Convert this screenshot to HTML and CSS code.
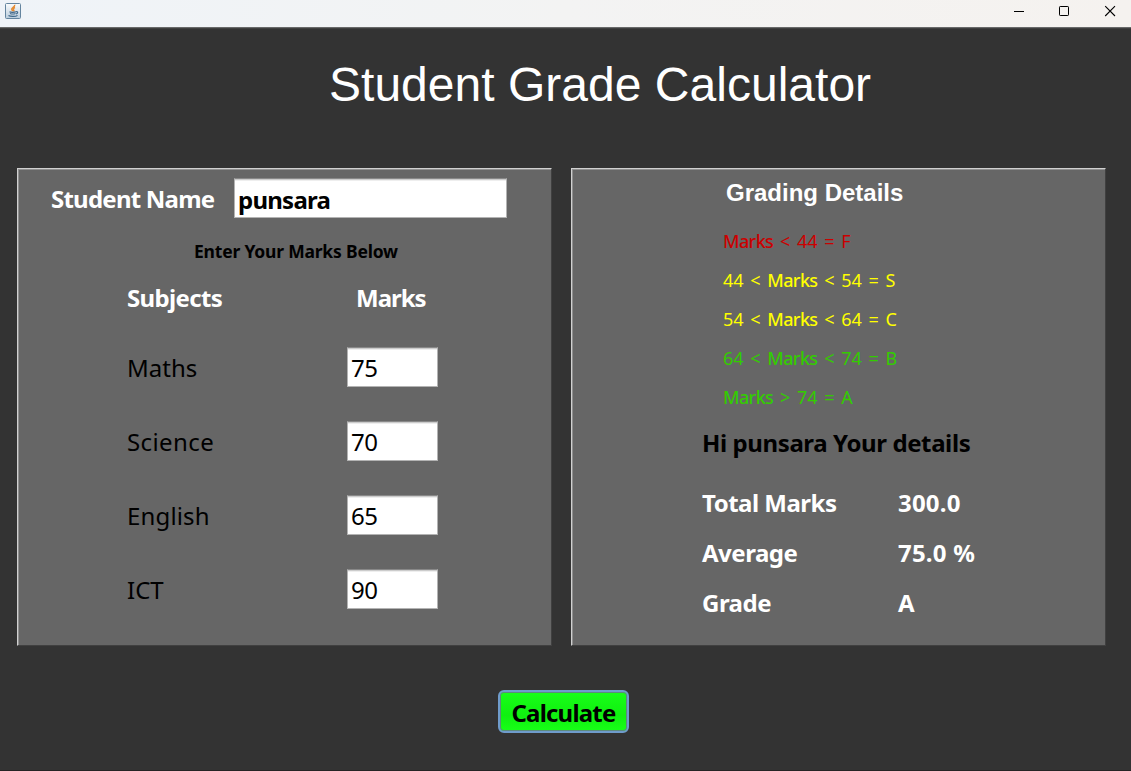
FILE: index.html
```html
<!DOCTYPE html>
<html lang="en">
<head>
<meta charset="utf-8">
<title>Student Grade Calculator</title>
<link rel="stylesheet" href="styles.css">
</head>
<body>
<header class="titlebar">
  <svg class="app-icon" width="16" height="16" viewBox="0 0 16 16" fill="none">
    <defs><linearGradient id="tile" x1="0" y1="0" x2="0" y2="1"><stop offset="0" stop-color="#fbfcfd"/><stop offset="1" stop-color="#b9ccdc"/></linearGradient></defs>
    <rect x=".5" y=".5" width="15" height="15" rx="1" fill="url(#tile)" stroke="#64849f"/>
    <path d="M9.700 1.800C10.400 4 6.200 4.500 6.700 6.300c.2.8 1 1.200 1 2M10 4.500c-2 .8-2.100 1.700-1.300 2.500.4.500.2 1-.2 1.300" stroke="#e58a32" stroke-width="1.400"/>
    <path d="M4.500 8.800c1 .7 5 .7 6.500 0M5 10.500c1.500.6 4 .6 5.500 0M11 8.700c2.300-.5 2.200 1.700 0 2.300M3.500 12.500c1.800 1.300 7.500 1.200 9-.2" stroke="#41688a" stroke-width="1.100"/>
  </svg>
  <div class="window-controls">
    <svg width="12" height="12" viewBox="0 0 12 12"><path d="M2 6.500h10" stroke="#000"/></svg>
    <svg width="12" height="12" viewBox="0 0 12 12"><rect x="1.500" y="1.500" width="9" height="9" rx=".7" fill="none" stroke="#000"/></svg>
    <svg width="12" height="12" viewBox="0 0 12 12"><path d="M1.200 1.200l9.800 9.800M11 1.200L1.200 11" stroke="#000" stroke-width="1.100"/></svg>
  </div>
</header>
<main class="window">
  <h1 class="title">Student Grade Calculator</h1>
  <div class="panels">
    <section class="panel entry">
      <div class="name-row"><span class="label name-label">Student Name</span><span class="field name-field">punsara</span></div>
      <p class="hint">Enter Your Marks Below</p>
      <div class="columns"><span class="label subjects">Subjects</span><span class="label marks">Marks</span></div>
      <div class="subject-list">
        <div class="subject-row"><span class="maths">Maths</span><span class="field mark">75</span></div>
        <div class="subject-row"><span class="science">Science</span><span class="field mark">70</span></div>
        <div class="subject-row"><span class="english">English</span><span class="field mark">65</span></div>
        <div class="subject-row"><span class="ict">ICT</span><span class="field mark">90</span></div>
      </div>
    </section>
    <section class="panel details">
      <h2 class="details-title">Grading Details</h2>
      <ul class="scale">
        <li class="fail"><b>Marks</b> &lt; 44 = F</li>
        <li class="pass">44 &lt; <b>Marks</b> &lt; 54 = S</li>
        <li class="pass">54 &lt; <b>Marks</b> &lt; 64 = C</li>
        <li class="good">64 &lt; <b>Marks</b> &lt; 74 = B</li>
        <li class="good"><b>Marks</b> &gt; 74 = A</li>
      </ul>
      <p class="greeting">Hi punsara Your details</p>
      <div class="results">
        <span>Total Marks</span><span class="value">300.0</span>
        <span>Average</span><span class="value">75.0 %</span>
        <span>Grade</span><span class="value">A</span>
      </div>
    </section>
  </div>
  <button class="calculate">Calculate</button>
</main>
</body>
</html>
```
FILE: styles.css
```css
* { box-sizing: border-box; }
body {
  margin: 0;
  width: 1131px;
  height: 771px;
  overflow: hidden;
  background: #333;
  font-family: "Noto Sans", "Open Sans", sans-serif;
  font-size: 24px;
  line-height: 32px;
  color: #000;
}
h1, h2, p, ul { margin: 0; padding: 0; }
.titlebar {
  display: flex;
  justify-content: space-between;
  align-items: flex-start;
  height: 28px;
  padding: 3px 15px 0 5px;
  background: linear-gradient(90deg, #eff3f8, #f3f3f3 50%, #f5f2ef);
  border-bottom: 1px solid #686969;
}
.app-icon { display: block; }
.window-controls { display: flex; gap: 34px; padding-top: 2px; }
.window-controls svg { display: block; }
.window {
  display: flex;
  flex-direction: column;
  height: 743px;
  border-top: 1px solid #404040;
  border-bottom: 1px solid #252525;
}
.title {
  margin: 28px 0 0 329px;
  font: 400 48px/56px "Liberation Sans", Arial, sans-serif;
  letter-spacing: .02px;
  white-space: nowrap;
  color: #fff;
}
.panels { display: flex; gap: 19px; margin: 55px 0 0 17px; }
.panel {
  width: 535px;
  height: 478px;
  background: #666;
  border: 1px solid;
  border-color: #d0d0d0 #404040 #404040 #d0d0d0;
  box-shadow: inset 1px 1px #909090;
}
.label { font-weight: 700; color: #fff; white-space: nowrap; }
.name-row { display: flex; align-items: center; margin-top: 9px; padding-left: 33px; }
.name-label { width: 183px; padding-top: 2px; letter-spacing: -.77px; }
.field {
  height: 40px;
  padding: 4px 0 0 3px;
  background: #fff;
  border: 1px solid #b3b3b3;
  border-top-color: #888;
  box-shadow: inset 0 1px #ccc, inset 0 2px #eee;
}
.name-field { width: 273px; padding-top: 5px; font-weight: 700; letter-spacing: -.75px; }
.hint { margin: 17px 0 0 176px; font-size: 17.500px; font-weight: 700; letter-spacing: -.2px; }
.columns { display: flex; margin: 15px 0 0 109px; }
.subjects { width: 229px; letter-spacing: -.65px; }
.marks { letter-spacing: -1px; }
.subject-list { display: flex; flex-direction: column; gap: 34px; margin: 33px 0 0 109px; }
.subject-row { display: grid; grid-template-columns: 220px 91px; align-items: center; }
.subject-row > :first-child { padding-top: 2px; }
.science { letter-spacing: .4px; }
.english { letter-spacing: .15px; }
.mark { letter-spacing: -.6px; }
.details-title {
  margin: 8px 0 0 154px;
  font: 700 24px/32px "Liberation Sans", Arial, sans-serif;
  color: #fff;
}
.scale {
  margin: 13px 0 0 151px;
  list-style: none;
  font-size: 18px;
  line-height: 39px;
  word-spacing: 2px;
  white-space: nowrap;
}
.scale b { font-weight: 500; letter-spacing: -.6px; }
.fail { color: #c00; }
.pass { color: #ff0; }
.good { color: #3c0; }
.greeting { margin: 10px 0 0 130px; font-weight: 700; letter-spacing: -.4px; }
.results {
  display: grid;
  grid-template-columns: 196px 150px;
  grid-auto-rows: 50px;
  margin: 19px 0 0 130px;
  line-height: 50px;
  font-weight: 700;
  letter-spacing: -.5px;
  color: #fff;
}
.value { letter-spacing: .2px; }
.calculate {
  width: 131px;
  height: 43px;
  margin: 44px 0 0 498px;
  padding: 2px 0 0;
  border: 2px solid #6f9bcb;
  border-radius: 6px;
  background: linear-gradient(#18ff18, #10f010 60%, #18ff18);
  box-shadow: inset 0 0 0 1px #5c8b7c;
  font: 700 24px/32px "Noto Sans", "Open Sans", sans-serif;
  letter-spacing: -.8px;
  color: #000;
}
```
